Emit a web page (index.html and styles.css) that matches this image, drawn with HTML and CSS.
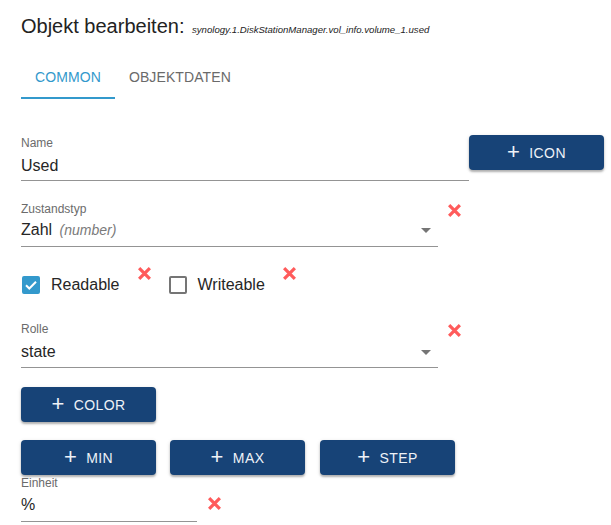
FILE: index.html
```html
<!DOCTYPE html>
<html lang="de">
<head>
<meta charset="utf-8">
<title>Objekt bearbeiten</title>
<link rel="stylesheet" href="styles.css">
</head>
<body>
<div class="page">
  <h1 class="title">Objekt bearbeiten: <span class="subtitle">synology.1.DiskStationManager.vol_info.volume_1.used</span></h1>

  <div class="tabs">
    <div class="tab active">Common</div>
    <div class="tab">Objektdaten</div>
  </div>

  <div class="row row-name">
    <div class="field field-name">
      <div class="label">Name</div>
      <div class="value">Used</div>
    </div>
    <button class="btn btn-icon"><span class="plus">+</span>Icon</button>
  </div>

  <div class="row row-type">
    <div class="field field-select">
      <div class="label">Zustandstyp</div>
      <div class="value">Zahl <em class="hint">(number)</em><span class="arrow"></span></div>
    </div>
    <span class="del del-top"><svg viewBox="0 0 14 14"><path d="M2 2L12 12M12 2L2 12"/></svg></span>
  </div>

  <div class="row row-checks">
    <label class="check">
      <span class="box checked"><svg viewBox="0 0 18 18"><path d="M4 9.2l3.3 3.3L14 5.8"/></svg></span>
      <span class="check-text">Readable</span>
    </label>
    <span class="del del-check"><svg viewBox="0 0 14 14"><path d="M2 2L12 12M12 2L2 12"/></svg></span>
    <label class="check">
      <span class="box"></span>
      <span class="check-text">Writeable</span>
    </label>
    <span class="del del-check"><svg viewBox="0 0 14 14"><path d="M2 2L12 12M12 2L2 12"/></svg></span>
  </div>

  <div class="row row-role">
    <div class="field field-select">
      <div class="label">Rolle</div>
      <div class="value">state<span class="arrow"></span></div>
    </div>
    <span class="del del-top"><svg viewBox="0 0 14 14"><path d="M2 2L12 12M12 2L2 12"/></svg></span>
  </div>

  <div class="row row-color">
    <button class="btn"><span class="plus">+</span>Color</button>
  </div>

  <div class="row row-minmax">
    <button class="btn"><span class="plus">+</span>Min</button>
    <button class="btn"><span class="plus">+</span>Max</button>
    <button class="btn"><span class="plus">+</span>Step</button>
  </div>

  <div class="row row-unit">
    <div class="field field-unit">
      <div class="label">Einheit</div>
      <div class="value">%</div>
    </div>
    <span class="del del-value"><svg viewBox="0 0 14 14"><path d="M2 2L12 12M12 2L2 12"/></svg></span>
  </div>
</div>
</body>
</html>
```

FILE: styles.css
```css
html, body {
  margin: 0;
  padding: 0;
  background: #ffffff;
}

body {
  font-family: "Liberation Sans", Arial, sans-serif;
  color: #1f1f1f;
}

.page {
  padding: 0 0 0 21px;
  width: 590px;
}

.title {
  margin: 14px 0 0 0;
  font-size: 20px;
  font-weight: normal;
  line-height: 24px;
  height: 24px;
  color: #222;
}

.subtitle {
  font-size: 9.6px;
  font-style: italic;
  margin-left: 2px;
}

.tabs {
  display: flex;
  margin-top: 17px;
  height: 44px;
}

.tab {
  display: flex;
  align-items: center;
  padding: 2px 14px 0 14px;
  font-size: 14px;
  text-transform: uppercase;
  letter-spacing: 0.1px;
  color: #6a6a6a;
  box-sizing: border-box;
  border-bottom: 2px solid transparent;
}

.tab.active {
  color: #3399cc;
  border-bottom-color: #3399cc;
}

.row {
  display: flex;
  align-items: flex-start;
}

.field {
  display: flex;
  flex-direction: column;
  border-bottom: 1px solid #949494;
}

.label {
  font-size: 12px;
  line-height: 14px;
  height: 14px;
  color: #6b6b6b;
}

.value {
  position: relative;
  font-size: 16px;
  line-height: 24px;
  height: 24px;
  color: #262626;
}

.hint {
  font-size: 14px;
  color: #7a7a7a;
  margin-left: 3px;
}

.arrow {
  position: absolute;
  right: 7px;
  top: 10px;
  width: 0;
  height: 0;
  border-left: 5px solid transparent;
  border-right: 5px solid transparent;
  border-top: 5px solid #757575;
}

.row-name {
  margin-top: 37px;
}

.field-name {
  width: 448px;
}

.field-name .value {
  margin-top: 4px;
  margin-bottom: 2px;
}

.row-type {
  margin-top: 21px;
}

.field-select {
  width: 417px;
}

.row-type .value {
  margin-top: 2px;
  margin-bottom: 4px;
}

.del {
  display: inline-flex;
  width: 15px;
  height: 15px;
}

.del svg {
  width: 15px;
  height: 15px;
}

.del path {
  stroke: #ff5b5b;
  stroke-width: 3;
  fill: none;
}

.del-top {
  margin-left: 9px;
  margin-top: 1px;
}

.btn {
  display: inline-flex;
  align-items: center;
  justify-content: center;
  width: 135px;
  height: 35px;
  border: none;
  border-radius: 4px;
  background: #174377;
  color: #eef2f7;
  font-family: "Liberation Sans", Arial, sans-serif;
  font-size: 14px;
  letter-spacing: 0.4px;
  text-transform: uppercase;
  box-shadow: 0 2px 2px rgba(0, 0, 0, 0.25), 0 1px 4px rgba(0, 0, 0, 0.12);
  padding: 0;
  cursor: pointer;
}

.plus {
  font-size: 22px;
  font-weight: normal;
  line-height: 20px;
  margin-right: 9px;
  margin-top: -2px;
}

.btn-icon {
  margin-top: -1px;
}

.row-checks {
  margin-top: 20px;
  height: 36px;
  align-items: flex-start;
}

.check {
  display: flex;
  align-items: center;
  height: 36px;
}

.box {
  display: inline-flex;
  width: 18px;
  height: 18px;
  box-sizing: border-box;
  border: 2px solid #757575;
  border-radius: 2px;
  margin-left: 1px;
}

.box.checked {
  background: #3399cc;
  border-color: #3399cc;
}

.box svg {
  width: 18px;
  height: 18px;
  margin: -2px;
}

.box svg path {
  stroke: #ffffff;
  stroke-width: 2;
  fill: none;
}

.check-text {
  font-size: 16px;
  margin-left: 11px;
  color: #262626;
}

.del-check {
  margin-left: 17px;
  margin-right: 16px;
  margin-top: -1px;
}

.row-role {
  margin-top: 19px;
}

.row-role .value {
  margin-top: 4px;
  margin-bottom: 3px;
}

.row-color {
  margin-top: 19px;
}

.row-minmax {
  margin-top: 18px;
  gap: 14px;
}

.row-minmax .btn:nth-child(3) {
  margin-left: 1px;
}

.row-unit {
  margin-top: 1px;
  align-items: center;
}

.field-unit {
  width: 176px;
}

.field-unit .value {
  margin-top: 3px;
  margin-bottom: 4px;
}

.del-value {
  margin-left: 10px;
  margin-top: 8px;
}
```
